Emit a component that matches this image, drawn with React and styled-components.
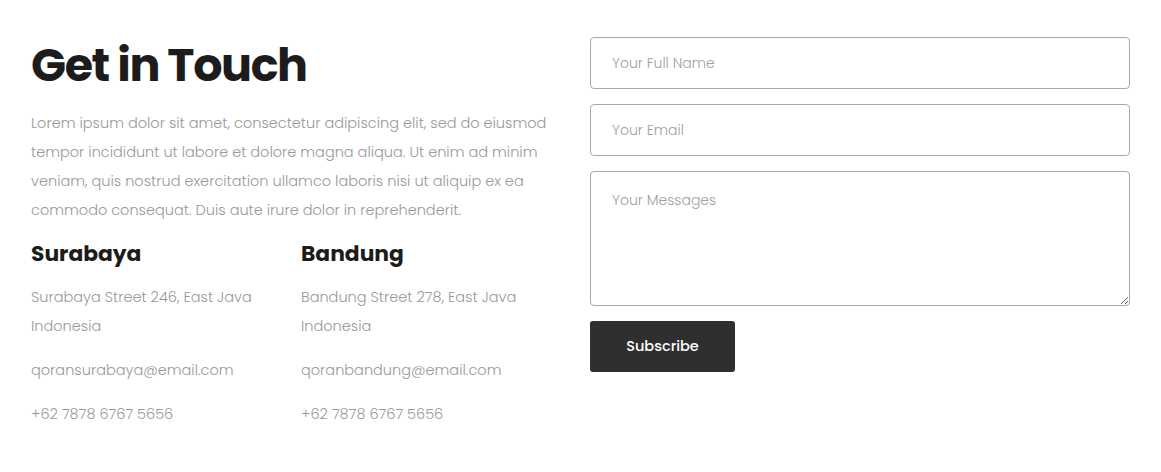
import styled, { createGlobalStyle } from "styled-components";

const GlobalStyle = createGlobalStyle`
  body {
    margin: 0;
    background: #ffffff;
    font-family: "Poppins", "Inter", "Noto Sans", sans-serif;
  }
  * {
    box-sizing: border-box;
  }
`;

const Section = styled.section`
  display: grid;
  grid-template-columns: 1fr 540px;
  column-gap: 30px;
  padding: 37px 31px 30px 31px;
`;

const InfoColumn = styled.div`
  display: flex;
  flex-direction: column;
`;

const Title = styled.h1`
  margin: 0;
  font-size: 46px;
  line-height: 56px;
  font-weight: 700;
  letter-spacing: -1.4px;
  color: #1c1c1c;
`;

const Lead = styled.p`
  margin: 16px 0 0 0;
  font-size: 14.5px;
  line-height: 29px;
  font-weight: 300;
  color: #999999;
`;

const Offices = styled.div`
  display: grid;
  grid-template-columns: 270px 1fr;
  margin-top: 14px;
`;

const Office = styled.div`
  display: flex;
  flex-direction: column;
`;

const City = styled.h3`
  margin: 0 0 14px 0;
  font-size: 21.8px;
  line-height: 30px;
  font-weight: 700;
  color: #1c1c1c;
`;

const Detail = styled.p`
  margin: 0 0 15px 0;
  font-size: 14.5px;
  line-height: 29px;
  font-weight: 300;
  color: #999999;
`;

const Form = styled.form`
  display: flex;
  flex-direction: column;
  gap: 15px;
  align-items: flex-start;
`;

const Field = styled.input`
  width: 100%;
  height: 52px;
  padding: 0 21px;
  border: 1px solid #a9a9a9;
  border-radius: 4px;
  font-family: inherit;
  font-size: 14px;
  font-weight: 300;
  color: #333;
  outline: none;
  &::placeholder {
    color: #a0a0a0;
  }
`;

const Message = styled.textarea`
  width: 100%;
  height: 135px;
  padding: 18px 21px;
  border: 1px solid #a9a9a9;
  border-radius: 4px;
  font-family: inherit;
  font-size: 14px;
  line-height: 20px;
  font-weight: 300;
  color: #333;
  outline: none;
  resize: vertical;
  &::placeholder {
    color: #a0a0a0;
  }
`;

const Button = styled.button`
  width: 145px;
  height: 51px;
  border: none;
  border-radius: 3px;
  background-color: #2f2f2f;
  color: #ffffff;
  font-family: inherit;
  font-size: 14.5px;
  font-weight: 500;
  cursor: pointer;
  &:hover {
    background-color: #1f1f1f;
  }
`;

const offices = [
  {
    city: "Surabaya",
    street: "Surabaya Street 246, East Java",
    country: "Indonesia",
    email: "qoransurabaya@email.com",
    phone: "+62 7878 6767 5656",
  },
  {
    city: "Bandung",
    street: "Bandung Street 278, East Java",
    country: "Indonesia",
    email: "qoranbandung@email.com",
    phone: "+62 7878 6767 5656",
  },
];

function App() {
  return (
    <>
      <GlobalStyle />
      <Section>
        <InfoColumn>
          <Title>Get in Touch</Title>
          <Lead>
            Lorem ipsum dolor sit amet, consectetur adipiscing elit, sed do eiusmod
            tempor incididunt ut labore et dolore magna aliqua. Ut enim ad minim
            veniam, quis nostrud exercitation ullamco laboris nisi ut aliquip ex ea
            commodo consequat. Duis aute irure dolor in reprehenderit.
          </Lead>
          <Offices>
            {offices.map((o) => (
              <Office key={o.city}>
                <City>{o.city}</City>
                <Detail>
                  {o.street}
                  <br />
                  {o.country}
                </Detail>
                <Detail>{o.email}</Detail>
                <Detail>{o.phone}</Detail>
              </Office>
            ))}
          </Offices>
        </InfoColumn>
        <Form onSubmit={(e) => e.preventDefault()}>
          <Field type="text" placeholder="Your Full Name" />
          <Field type="email" placeholder="Your Email" />
          <Message placeholder="Your Messages" />
          <Button type="submit">Subscribe</Button>
        </Form>
      </Section>
    </>
  );
}

export default App;
